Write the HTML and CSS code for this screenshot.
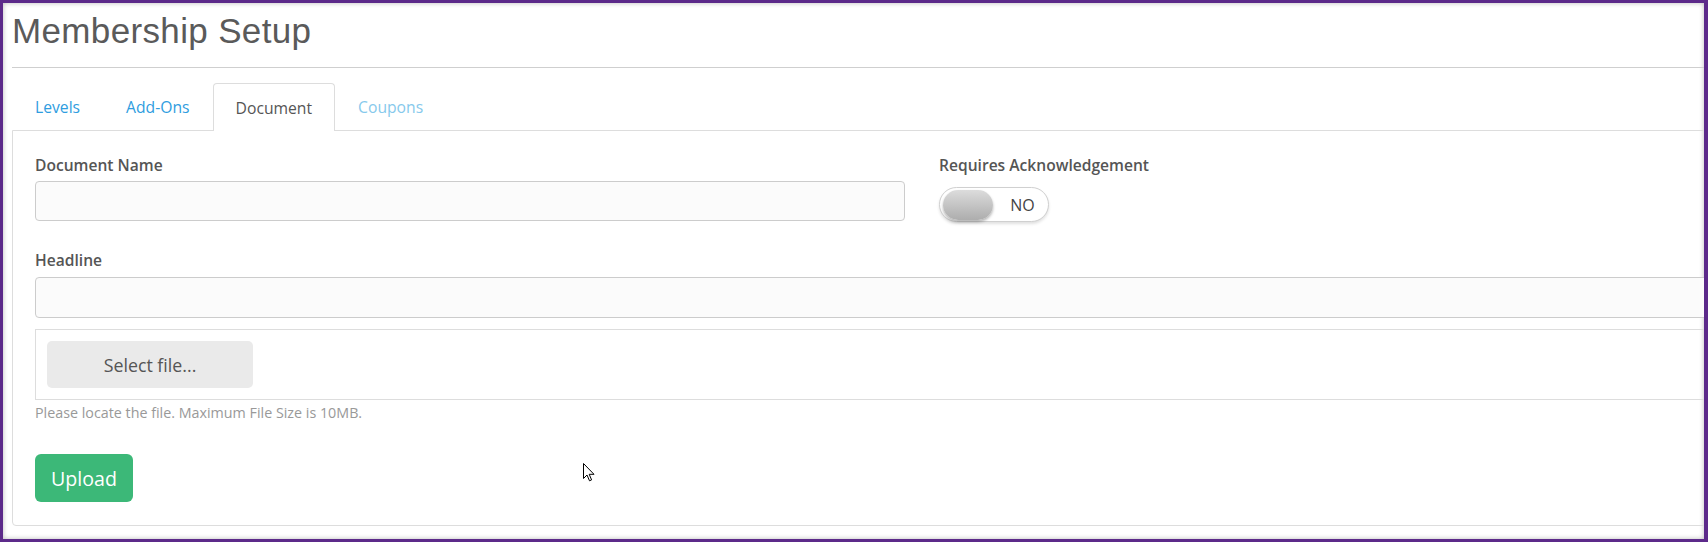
FILE: index.html
```html
<!DOCTYPE html>
<html lang="en">
<head>
<meta charset="utf-8">
<title>Membership Setup</title>
<link rel="stylesheet" href="styles.css">
</head>
<body>
<div class="frame">
  <div class="page">
    <div class="header">
      <h1 class="title">Membership Setup</h1>
    </div>
    <ul class="tabs">
      <li class="tab">Levels</li>
      <li class="tab">Add-Ons</li>
      <li class="tab active">Document</li>
      <li class="tab muted">Coupons</li>
    </ul>
    <div class="panel">
      <div class="row">
        <div class="field">
          <label class="label">Document Name</label>
          <div class="input"></div>
        </div>
        <div class="field">
          <label class="label">Requires Acknowledgement</label>
          <div class="toggle">
            <span class="knob"></span>
            <span class="toggle-text">NO</span>
          </div>
        </div>
      </div>
      <div class="field headline">
        <label class="label">Headline</label>
        <div class="input tall"></div>
      </div>
      <div class="filebox">
        <button class="select-btn">Select file...</button>
      </div>
      <p class="hint">Please locate the file. Maximum File Size is 10MB.</p>
      <button class="upload-btn">Upload</button>
    </div>
  </div>
  <svg class="cursor" width="12" height="19" viewBox="0 0 12 19">
    <path d="M0.5 0.5 L0.5 15.5 L4 12 L6.5 17.8 L8.6 16.9 L6.2 11.3 L11 11.3 Z" fill="#fff" stroke="#000" stroke-width="1" stroke-linejoin="miter"/>
  </svg>
</div>
</body>
</html>
```

FILE: styles.css
```css
* { box-sizing: border-box; }
html, body { margin: 0; padding: 0; background: #fff; }
body { font-family: "Open Sans", "Noto Sans", sans-serif; color: #555; }

.frame {
  position: relative;
  width: 1708px;
  height: 542px;
  border: 3px solid #5c2a8a;
  border-right-width: 4px;
  overflow: hidden;
  background: #fff;
  box-shadow: inset 0 0 5px rgba(0, 0, 0, 0.28);
}

.page {
  margin-left: 9px;
  margin-right: -40px;
}

.header {
  padding: 8px 0 16px 0;
  border-bottom: 1px solid #cfcfcf;
}
.title {
  margin: 0;
  font-family: "Liberation Sans", Arial, sans-serif;
  font-weight: normal;
  font-size: 35px;
  line-height: 40px;
  letter-spacing: 0.35px;
  color: #5a5a5a;
}

.tabs {
  list-style: none;
  margin: 15px 0 0 0;
  padding: 0;
  display: flex;
  position: relative;
  z-index: 1;
}
.tab {
  height: 47px;
  padding: 0 22px;
  display: flex;
  align-items: center;
  font-size: 15.7px;
  color: #2f9de0;
  border: 1px solid transparent;
  border-bottom: none;
  border-radius: 4px 4px 0 0;
}
.tab.active {
  color: #555;
  border-color: #ddd;
  background: #fff;
  height: 48px;
  margin-bottom: -1px;
}
.tab.muted { color: #86c9ec; }

.panel {
  border: 1px solid #ddd;
  border-radius: 0 0 0 4px;
  padding: 23px 0 23px 22px;
}

.row {
  display: grid;
  grid-template-columns: 870px 1fr;
  column-gap: 34px;
}

.label {
  display: block;
  font-size: 15.6px;
  font-weight: 600;
  line-height: 22px;
  color: #555;
}

.input {
  margin-top: 5px;
  height: 40px;
  border: 1px solid #ccc;
  border-radius: 4px;
  background: #fbfbfb;
}
.input.tall { height: 41px; margin-top: 6px; }

.headline { margin-top: 27px; }

.toggle {
  margin-top: 11px;
  width: 110px;
  height: 35px;
  border: 1px solid #d0d0d0;
  border-radius: 18px;
  background: #fff;
  display: flex;
  align-items: center;
  padding-left: 3px;
  box-shadow: 0 2px 3px rgba(0, 0, 0, 0.12);
}
.knob {
  width: 50px;
  height: 30px;
  border-radius: 15px;
  background: linear-gradient(#dcdcdc, #adadad);
  box-shadow: 0 2px 3px rgba(0, 0, 0, 0.3);
}
.toggle-text {
  flex: 1;
  text-align: center;
  font-size: 16px;
  color: #444;
  padding-left: 4px;
}

.filebox {
  margin-top: 11px;
  border: 1px solid #ddd;
  padding: 11px;
}
.select-btn {
  display: block;
  width: 206px;
  height: 47px;
  border: none;
  border-radius: 5px;
  background: #eaeaea;
  font-family: "Open Sans", "Noto Sans", sans-serif;
  font-size: 17.8px;
  color: #555;
}

.hint {
  margin: 3px 0 0 0;
  font-size: 14.3px;
  line-height: 19px;
  color: #999;
}

.upload-btn {
  display: block;
  margin-top: 32px;
  width: 98px;
  height: 48px;
  border: none;
  border-radius: 6px;
  background: #3cb878;
  color: #fff;
  font-family: "Open Sans", "Noto Sans", sans-serif;
  font-size: 19.6px;
}

.cursor {
  position: absolute;
  left: 580px;
  top: 460px;
}
```
